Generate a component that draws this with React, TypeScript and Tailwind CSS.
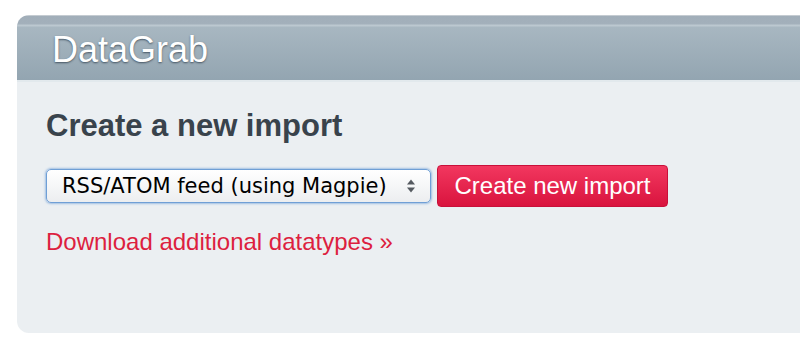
import React from 'react'

function SelectBox({ value }: { value: string }) {
  return (
    <div className="relative flex h-[34px] w-[385px] items-center rounded-[5px] border border-[#6f9fd6] bg-[linear-gradient(to_bottom,#ffffff,#eceef0)] pl-[15px] shadow-[0_0_2px_1px_rgba(110,158,214,0.6)]">
      <span className="font-['DejaVu_Sans',sans-serif] text-[21px] leading-none text-black">{value}</span>
      <svg className="absolute right-[14px] top-1/2 -translate-y-1/2" width="10" height="16" viewBox="0 0 10 16">
        <path d="M5 1.5 L9 6.5 H1 Z" fill="#555a60" />
        <path d="M5 14.5 L9 9.5 H1 Z" fill="#555a60" />
      </svg>
    </div>
  )
}

export default function App() {
  return (
    <div className="flex min-h-[349px] bg-white pt-[15px] font-['Liberation_Sans',Arial,sans-serif]">
      <div className="ml-[17px] flex h-[318px] flex-1 flex-col overflow-hidden rounded-l-[12px] bg-[#ebeff2]">
        <div className="h-[65px] border-t border-[#c4cbd1] bg-[linear-gradient(to_bottom,#a1aeb9_0px,#a3b0bb_8px,#bcc8d0_9px,#bcc8d0_10px,#a8b7c1_11px,#93a5b1_100%)] pl-[35px] pt-[13px]">
          <h1 className="text-[36px] leading-[42px] text-white [text-shadow:0_1px_2px_rgba(40,55,70,0.75)]">DataGrab</h1>
        </div>
        <div className="h-[2px] bg-[#e2e9ed]" />
        <div className="flex flex-col pl-[29px] pt-[26px]">
          <h2 className="text-[31px] font-bold leading-[36px] text-[#39434c]">Create a new import</h2>
          <div className="mt-[21px] flex items-center gap-[6px]">
            <SelectBox value="RSS/ATOM feed (using Magpie)" />
            <button className="h-[42px] w-[231px] rounded-[4px] border border-[#c8103a] bg-[linear-gradient(to_bottom,#f2375f,#d9143e)] text-[24px] leading-none text-white">
              Create new import
            </button>
          </div>
          <a href="#" className="mt-[21px] text-[24px] leading-[28px] text-[#dd1f40]">
            Download additional datatypes »
          </a>
        </div>
      </div>
    </div>
  )
}
